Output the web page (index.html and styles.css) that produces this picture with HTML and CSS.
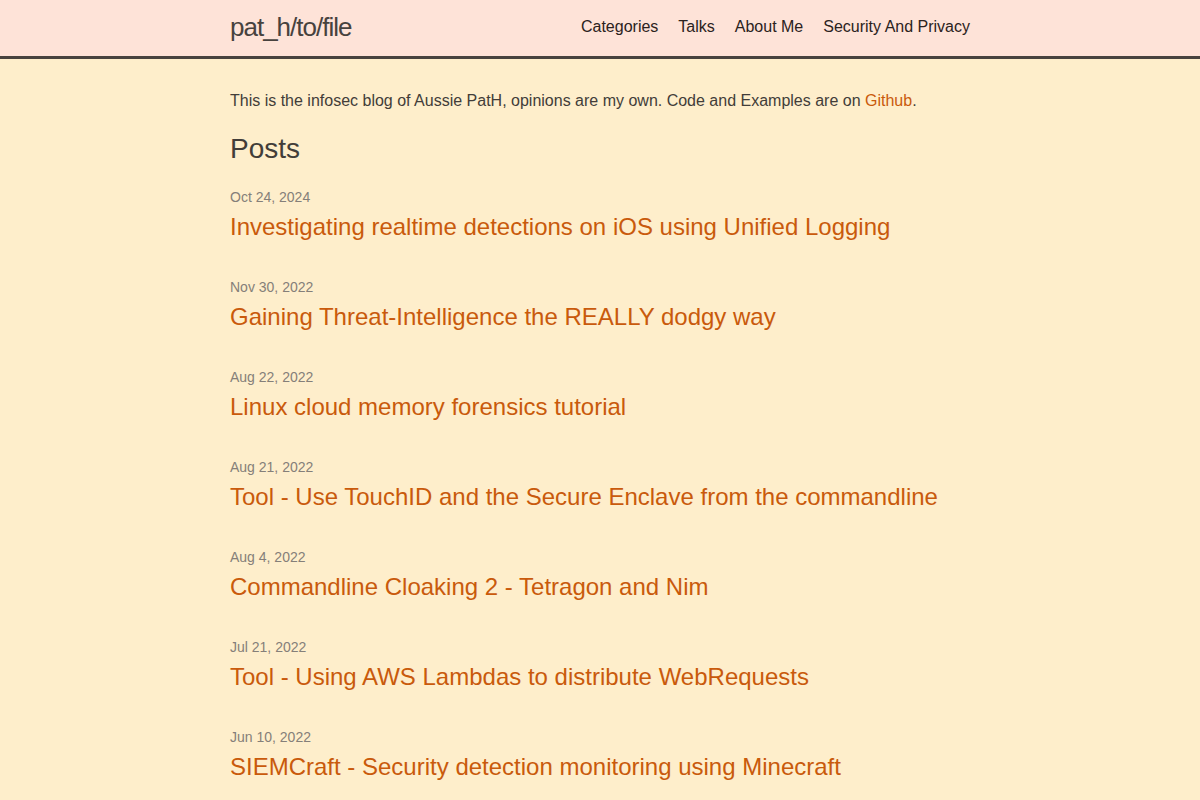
FILE: index.html
```html
<!DOCTYPE html>
<html lang="en">
<head>
<meta charset="utf-8">
<title>pat_h/to/file</title>
<link rel="stylesheet" href="styles.css">
</head>
<body>
<header class="site-header">
  <div class="wrapper header-inner">
    <a class="site-title" href="#">pat_h/to/file</a>
    <nav class="site-nav">
      <a class="page-link" href="#">Categories</a>
      <a class="page-link" href="#">Talks</a>
      <a class="page-link" href="#">About Me</a>
      <a class="page-link" href="#">Security And Privacy</a>
    </nav>
  </div>
</header>
<main class="page-content">
  <div class="wrapper">
    <p class="intro">This is the infosec blog of Aussie PatH, opinions are my own. Code and Examples are on <a href="#">Github</a>.</p>
    <h2 class="post-list-heading">Posts</h2>
    <ul class="post-list">
      <li><span class="post-meta">Oct 24, 2024</span><h3><a class="post-link" href="#">Investigating realtime detections on iOS using Unified Logging</a></h3></li>
      <li><span class="post-meta">Nov 30, 2022</span><h3><a class="post-link" href="#">Gaining Threat-Intelligence the REALLY dodgy way</a></h3></li>
      <li><span class="post-meta">Aug 22, 2022</span><h3><a class="post-link" href="#">Linux cloud memory forensics tutorial</a></h3></li>
      <li><span class="post-meta">Aug 21, 2022</span><h3><a class="post-link" href="#">Tool - Use TouchID and the Secure Enclave from the commandline</a></h3></li>
      <li><span class="post-meta">Aug 4, 2022</span><h3><a class="post-link" href="#">Commandline Cloaking 2 - Tetragon and Nim</a></h3></li>
      <li><span class="post-meta">Jul 21, 2022</span><h3><a class="post-link" href="#">Tool - Using AWS Lambdas to distribute WebRequests</a></h3></li>
      <li><span class="post-meta">Jun 10, 2022</span><h3><a class="post-link" href="#">SIEMCraft - Security detection monitoring using Minecraft</a></h3></li>
    </ul>
  </div>
</main>
</body>
</html>
```
FILE: styles.css
```css
html, body {
  margin: 0;
  padding: 0;
}
body {
  background: #feeecb;
  color: #423d39;
  font-family: "Liberation Sans", Arial, sans-serif;
  font-size: 16px;
  line-height: 1.5;
}
a {
  color: #c95a0c;
  text-decoration: none;
}
.wrapper {
  max-width: 740px;
  margin: 0 auto;
}
.site-header {
  background: #fee3d8;
  border-bottom: 3px solid #48433f;
}
.header-inner {
  display: flex;
  justify-content: space-between;
  align-items: center;
  height: 56px;
}
.site-title {
  font-size: 26px;
  letter-spacing: -1px;
  line-height: 54px;
  padding-bottom: 2px;
  color: #47423e;
}
.site-nav {
  display: flex;
  gap: 20px;
  padding-bottom: 2px;
}
.page-link {
  color: #2b2220;
  font-size: 16px;
  line-height: 54px;
}
.page-content {
  padding: 30px 0;
}
.intro {
  margin: 0 0 15px;
}
.post-list-heading {
  font-size: 28px;
  font-weight: 400;
  line-height: 42px;
  margin: 0 0 15px;
}
.post-list {
  list-style: none;
  margin: 0;
  padding: 0;
}
.post-list li {
  margin-bottom: 30px;
}
.post-meta {
  display: block;
  font-size: 14px;
  line-height: 24px;
  color: #857f79;
}
.post-list h3 {
  margin: 0;
  font-weight: 400;
  font-size: 24px;
  line-height: 36px;
}
```
